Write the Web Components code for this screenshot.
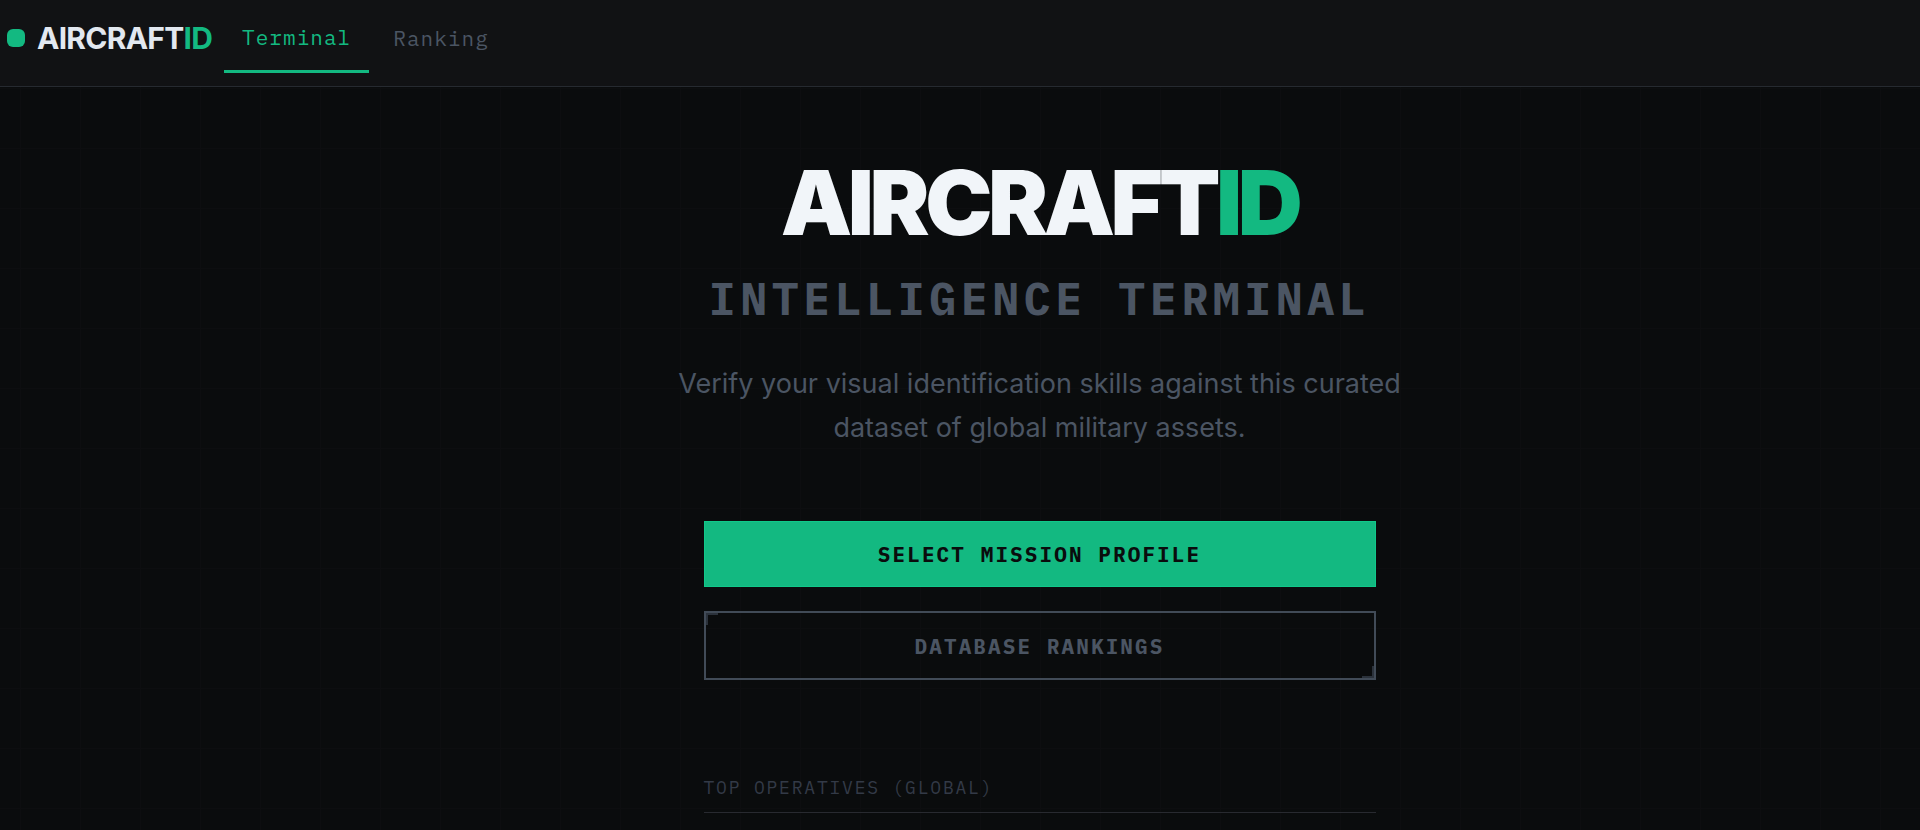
<!DOCTYPE html>
<html lang="en">
<head>
<meta charset="utf-8">
<title>AircraftID</title>
<style>
  :root {
    --green: #13b981;
    --slate: #4b5563;
    --slate-dim: #333a47;
    --mono: "IBM Plex Mono", "Liberation Mono", "DejaVu Sans Mono", monospace;
    --sans: Inter, "Liberation Sans", sans-serif;
  }
  body { margin: 0; background: #0a0c0d; color: #f1f5f9; font-family: var(--sans); overflow: hidden; }
</style>
</head>
<body>
<aircraft-app></aircraft-app>
<script>
const define = (name, html) => {
  const template = document.createElement('template');
  template.innerHTML = html;
  customElements.define(name, class extends HTMLElement {
    constructor() {
      super();
      this.attachShadow({ mode: 'open' }).append(template.content.cloneNode(true));
    }
  });
};

define('brand-name', `
  <style>
    :host { display: inline-block; letter-spacing: -0.05em; white-space: nowrap; }
    span { color: var(--green); }
  </style>AIRCRAFT<span>ID</span>`);

define('nav-tab', `
  <style>
    :host { display: block; }
    ::slotted(a) {
      display: flex; align-items: center; box-sizing: border-box; height: 70px; padding: 0 18px;
      font: 400 21px/32px var(--mono); letter-spacing: 0.05em;
      color: var(--slate); text-decoration: none;
    }
    :host([active]) ::slotted(a) { color: var(--green); border-bottom: 3px solid var(--green); }
  </style><slot></slot>`);

define('site-header', `
  <style>
    :host { display: block; background: #111214; border-bottom: 1px solid #262a30; }
    header { display: flex; align-items: center; padding: 3px 0 13px 7px; }
    .dot { width: 18px; height: 18px; border-radius: 6px; background: var(--green); margin-right: 12px; }
    brand-name { font: 700 30px/40px var(--sans); letter-spacing: -0.025em; color: #e2e8f0; margin-right: 12px; }
    nav { display: flex; gap: 6px; }
  </style>
  <header>
    <span class="dot"></span>
    <brand-name></brand-name>
    <nav>
      <nav-tab active><a href="#terminal">Terminal</a></nav-tab>
      <nav-tab><a href="#ranking">Ranking</a></nav-tab>
    </nav>
  </header>`);

define('action-button', `
  <style>
    :host { display: block; }
    button {
      position: relative; display: block; box-sizing: border-box; width: 100%; height: 69px; padding: 0;
      border: 2px solid #414b57; border-radius: 0; background: transparent; color: var(--slate);
      font: 700 21px/32px var(--mono); letter-spacing: 0.1em; cursor: pointer;
    }
    button::before, button::after {
      content: ""; position: absolute; box-sizing: border-box; width: 12px; height: 12px;
      border: 0 solid #2b323b;
    }
    button::before { top: 0; left: 0; border-width: 2px 0 0 2px; }
    button::after { right: 0; bottom: 0; border-width: 0 2px 2px 0; }
    :host([primary]) button {
      height: 66px; background: var(--green); color: #0a0c0d; border: 1px solid #10c98a;
    }
    :host([primary]) button::before, :host([primary]) button::after { display: none; }
  </style>
  <button type="button"><slot></slot></button>`);

define('terminal-hero', `
  <style>
    :host { display: flex; flex-direction: column; align-items: center; text-align: center; }
    h1, h2, p { margin: 0; }
    h1 { font: 900 90px/90px var(--sans); }
    h2 { margin-top: 23px; font: 700 45px/54px var(--mono); letter-spacing: 0.1em; color: var(--slate); }
    p { margin-top: 37px; max-width: 768px; font: 400 27px/44px var(--sans); color: var(--slate); }
  </style>
  <h1><brand-name></brand-name></h1>
  <h2>INTELLIGENCE TERMINAL</h2>
  <p>Verify your visual identification skills against this curated dataset of global military assets.</p>`);

define('top-operatives', `
  <style>
    :host { display: block; }
    h3 {
      margin: 0; padding-bottom: 12px; border-bottom: 1px solid #282a30;
      font: 400 18px/24px var(--mono); letter-spacing: 0.1em; color: var(--slate-dim);
    }
  </style><h3>TOP OPERATIVES (GLOBAL)</h3>`);

define('aircraft-app', `
  <style>
    :host { display: block; }
    main {
      display: flex; flex-direction: column; align-items: center;
      min-height: calc(100vh - 87px); box-sizing: border-box; padding: 71px 0 0 159px;
      background:
        linear-gradient(90deg, #0d0e10 1px, transparent 1px) 20px 0 / 60px 60px,
        linear-gradient(#0d0e10 1px, transparent 1px) 0 1px / 60px 60px;
    }
    .actions { display: grid; gap: 24px; margin-top: 71px; width: 100%; max-width: 672px; }
    top-operatives { margin-top: 96px; width: 100%; max-width: 672px; }
  </style>
  <site-header></site-header>
  <main>
    <terminal-hero></terminal-hero>
    <div class="actions">
      <action-button primary>SELECT MISSION PROFILE</action-button>
      <action-button>DATABASE RANKINGS</action-button>
    </div>
    <top-operatives></top-operatives>
  </main>`);
</script>
</body>
</html>
